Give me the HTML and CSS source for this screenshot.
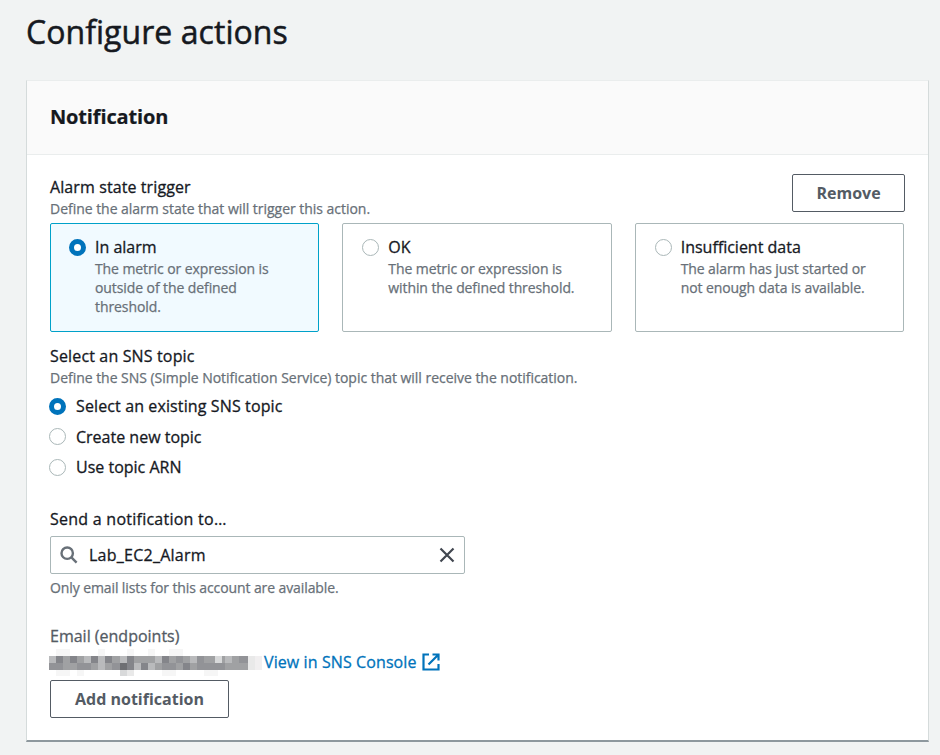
FILE: index.html
```html
<!DOCTYPE html>
<html lang="en"><head><meta charset="utf-8"><title>Configure actions</title><link rel="stylesheet" href="styles.css"></head>
<body>
<h1>Configure actions</h1>
<section class="panel">
<header class="panel-head"><h2>Notification</h2></header>
<div class="panel-body">
<div class="trigger-row"><div><div class="label">Alarm state trigger</div><div class="hint">Define the alarm state that will trigger this action.</div></div><button class="btn remove">Remove</button></div>
<div class="tiles">
<div class="tile selected"><span class="radio on"></span><div><div class="label">In alarm</div><div class="hint">The metric or expression is<br>outside of the defined<br>threshold.</div></div></div>
<div class="tile"><span class="radio"></span><div><div class="label">OK</div><div class="hint">The metric or expression is<br>within the defined threshold.</div></div></div>
<div class="tile"><span class="radio"></span><div><div class="label">Insufficient data</div><div class="hint">The alarm has just started or<br>not enough data is available.</div></div></div>
</div>
<div class="topic"><div class="label">Select an SNS topic</div><div class="hint">Define the SNS (Simple Notification Service) topic that will receive the notification.</div></div>
<div class="options">
<div class="option"><span class="radio on"></span><span class="label wide">Select an existing SNS topic</span></div>
<div class="option"><span class="radio"></span><span class="label">Create new topic</span></div>
<div class="option"><span class="radio"></span><span class="label">Use topic ARN</span></div>
</div>
<div class="label send">Send a notification to…</div>
<div class="search">
<svg class="glass" width="18" height="18" viewBox="0 0 18 18"><circle cx="7.2" cy="7.2" r="5.7"/><path d="M11.4 11.4L16.6 16.6"/></svg>
<span class="label wide">Lab_EC2_Alarm</span>
<svg class="clear" width="16" height="16" viewBox="0 0 16 16"><path d="M1.5 1.5L14.5 14.5M14.5 1.5L1.5 14.5"/></svg>
</div>
<div class="hint lists">Only email lists for this account are available.</div>
<div class="label email">Email (endpoints)</div>
<div class="endpoint">
<svg class="mosaic" width="214" height="30" viewBox="0 0 214 30" shape-rendering="crispEdges">
<g fill="#f6f6f6"><path d="M6 2h14v7H6zM48 2h7v7h-7zM77 2h7v7h-7zM98 2h7v7h-7zM119 2h14v7h-14zM6 23h14v6H6zM27 23h7v6h-7zM112 23h14v6h-14zM154 23h14v6h-14z"/></g>
<path fill="#a0a1a3" d="M-1 9h199v14H-1z"/>
<path fill="#84858a" d="M6 9h7v7H6zM20 9h7v7h-7zM41 9h7v7h-7zM55 9h7v7h-7zM77 9h7v7h-7zM112 9h7v7h-7zM77 16h7v7h-7zM91 16h7v7h-7zM133 16h7v7h-7z"/>
<path fill="#b9babc" d="M-1 9h7v7h-7zM34 9h7v7h-7zM48 9h7v7h-7zM70 9h7v7h-7zM105 9h7v7h-7zM140 9h7v7h-7zM175 9h7v7h-7zM48 16h7v7h-7zM84 16h7v7h-7zM98 16h7v7h-7z"/>
<path fill="#929397" d="M-1 16h14v7H-1zM27 16h14v7H27zM62 16h8v7h-8zM126 9h7v7h-7zM147 9h7v7h-7zM189 9h9v7h-9zM112 16h14v7h-14zM147 16h28v7h-28z"/>
<path fill="#6e6f73" d="M70 16h7v7h-7z"/><path fill="#d8d9da" d="M165 9h7v7h-7zM70 23h7v6h-7z"/><path fill="#e9e9e9" d="M77 23h7v6h-7zM198 9h7v14h-7z"/><path fill="#f1eff0" d="M205 9h7v14h-7z"/>
</svg>
<a class="label link">View in SNS Console</a>
<svg class="ext" width="18" height="18" viewBox="0 0 18 18"><path d="M7 1.5H1.5V16.5H16.5V11M10.5 1.5H16.5V7.5M16 2L6.5 11.5"/></svg>
</div>
<button class="btn add">Add notification</button>
</div>
</section>
</body></html>
```
FILE: styles.css
```css
*{box-sizing:border-box}
body{margin:0;height:755px;overflow:hidden;background:#f1f3f3;color:#16191f;font-family:"Open Sans","Noto Sans",sans-serif;font-stretch:90%;padding:0 11px 0 26px}
h1{margin:0;height:80px;padding-top:10px;font-size:32px;line-height:44px;font-weight:400;letter-spacing:.05px;white-space:nowrap;-webkit-text-stroke:.5px #16191f}
.panel{height:662px;width:903px;background:#fff;border:1px solid #d5dbdb;border-top-color:#eaeded;border-bottom:2px solid #8e989e}
.panel-head{height:74px;background:#fafafa;border-bottom:1px solid #eaeded;padding:0 23px 1px;display:flex;align-items:center}
h2{margin:0;font-size:20px;line-height:28px;font-weight:700;letter-spacing:-.15px;-webkit-text-stroke:.2px #16191f}
.panel-body{padding:19px 24px 0 23px}
.label{font-size:16px;line-height:22px;white-space:nowrap;-webkit-text-stroke:.3px currentColor}
.wide{letter-spacing:.12px}
.hint{font-size:14px;line-height:19px;letter-spacing:-.03px;color:#687078;white-space:nowrap;-webkit-text-stroke:.25px currentColor}
.trigger-row{display:flex;justify-content:space-between;height:49px}
.trigger-row .label{margin-top:2px;letter-spacing:.1px}
.trigger-row .hint{margin-top:1px}
.btn{height:38px;border:1px solid #545b64;border-radius:2px;background:#fff;color:#545b64;font:inherit;font-size:16px;font-weight:700;padding:0}
.remove{width:113px;margin-right:-1px}
.tiles{display:grid;grid-template-columns:repeat(3,1fr);gap:23px;height:109px}
.tile{border:1px solid #aab7b8;border-radius:2px;display:flex;gap:9px;padding:12px 18px}
.tile + .tile{padding-left:19px}
.tile.selected{border-color:#00a1c9;background:#f1faff}
.tile .hint{letter-spacing:-.09px;margin-top:1px}
.radio{flex:none;width:17px;height:17px;border:1px solid #aab7b8;border-radius:50%;background:#fff}
.radio.on{border:5px solid #0073bb}
.tile .radio{margin-top:3px}
.topic{margin-top:13px}
.topic .label{letter-spacing:.15px}
.topic .hint{margin-top:1px}
.options{display:grid;gap:8.5px;margin-top:8px}
.option{display:flex;gap:9px;align-items:center}
.option .radio{margin-left:-1px}
.option .label{margin-left:1px}
.send{margin-top:30px;letter-spacing:.25px}
.search{margin-top:6px;width:415px;height:38px;border:1px solid #aab7b8;border-radius:2px;display:flex;align-items:center;padding:0 9px}
svg{fill:none;flex:none}
.glass{stroke:#687078;stroke-width:2.4}
.search .label{margin-left:11px;flex:1;letter-spacing:.25px}
.clear{stroke:#414750;stroke-width:2.2}
.lists{margin-top:4px;letter-spacing:-.1px}
.email{margin-top:28px;color:#545b64}
.endpoint{display:flex;align-items:center;height:30px;margin-bottom:3px}
.mosaic{overflow:visible}
.link{color:#0073bb;letter-spacing:.1px}
.ext{stroke:#0073bb;stroke-width:2.2;margin-left:5px}
.add{width:179px;display:block}
```
